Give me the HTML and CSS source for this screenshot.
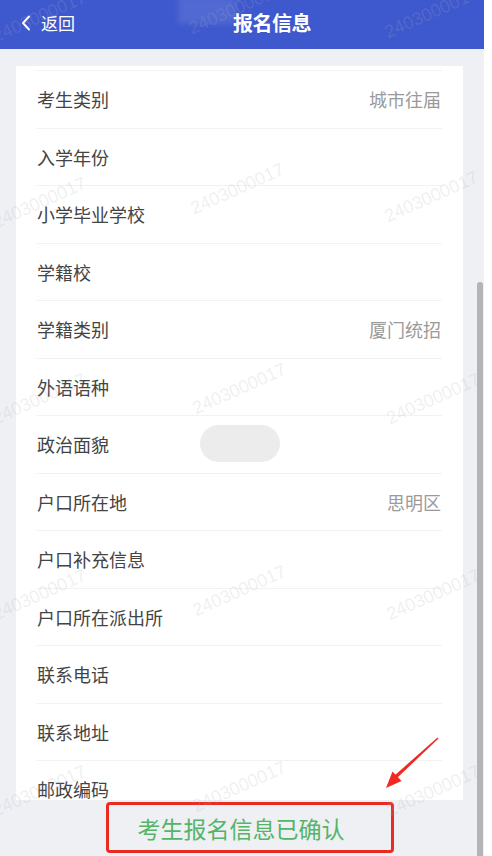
FILE: index.html
```html
<!DOCTYPE html>
<html lang="zh-CN">
  <head>
    <meta charset="UTF-8" />
    <title>报名信息</title>
    <link rel="stylesheet" href="styles.css">
  </head>
  <body>
    <div class="screen">
      <!-- Top bar -->
      <div class="topbar">
        <div class="back">
          <svg class="chev" width="10" height="16" viewBox="0 0 10 16">
            <polyline points="8,1.5 2,8 8,14.5" fill="none" stroke="#fff" stroke-width="2" stroke-linecap="round" stroke-linejoin="round"/>
          </svg>
          <span>返回</span>
        </div>
        <div class="title">报名信息</div>
        <div class="smudge"></div>
      </div>

      <!-- Info list -->
      <div class="content">
        <div class="card">
          <div class="list">
            <div class="row"><span class="label">考生类别</span><span class="value">城市往届</span></div>
            <div class="row"><span class="label">入学年份</span><span class="value"></span></div>
            <div class="row"><span class="label">小学毕业学校</span><span class="value"></span></div>
            <div class="row"><span class="label">学籍校</span><span class="value"></span></div>
            <div class="row"><span class="label">学籍类别</span><span class="value">厦门统招</span></div>
            <div class="row"><span class="label">外语语种</span><span class="value"></span></div>
            <div class="row"><span class="label">政治面貌</span><span class="value"></span></div>
            <div class="row"><span class="label">户口所在地</span><span class="value">思明区</span></div>
            <div class="row"><span class="label">户口补充信息</span><span class="value"></span></div>
            <div class="row"><span class="label">户口所在派出所</span><span class="value"></span></div>
            <div class="row"><span class="label">联系电话</span><span class="value"></span></div>
            <div class="row"><span class="label">联系地址</span><span class="value"></span></div>
            <div class="row"><span class="label">邮政编码</span><span class="value"></span></div>
          </div>
        </div>
      </div>

      <!-- Bottom bar -->
      <div class="footer">
        <div class="confirm">考生报名信息已确认</div>
      </div>

      <!-- Overlays -->
      <div class="toast"></div>
      <div class="scrollbar"></div>
      <svg class="arrow" width="484" height="856" viewBox="0 0 484 856">
        <polygon points="437.5,737.5 438.5,738.5 396.5,778.5 394,776" fill="#ee2a22"/>
        <polygon points="386,788 401.5,781 392.5,771.5" fill="#ee2a22"/>
      </svg>

      <div class="wm" style="left:-2px;top:26px">2403000017</div>
      <div class="wm" style="left:194px;top:18px">2403000017</div>
      <div class="wm" style="left:390px;top:22px">2403000017</div>
      <div class="wm" style="left:-2px;top:212px">2403000017</div>
      <div class="wm" style="left:196px;top:198px">2403000017</div>
      <div class="wm" style="left:390px;top:206px">2403000017</div>
      <div class="wm" style="left:-2px;top:408px">2403000017</div>
      <div class="wm" style="left:198px;top:398px">2403000017</div>
      <div class="wm" style="left:392px;top:408px">2403000017</div>
      <div class="wm" style="left:-2px;top:604px">2403000017</div>
      <div class="wm" style="left:198px;top:600px">2403000017</div>
      <div class="wm" style="left:392px;top:604px">2403000017</div>
      <div class="wm" style="left:-2px;top:800px">2403000017</div>
      <div class="wm" style="left:198px;top:796px">2403000017</div>
      <div class="wm" style="left:392px;top:800px">2403000017</div>
    </div>
  </body>
</html>
```

FILE: styles.css
```css
body {
  margin: 0;
  background: #fff;
  font-family: "Noto Sans CJK SC", "Noto Sans", sans-serif;
}

.screen {
  position: relative;
  width: 484px;
  height: 856px;
  background: #eef0f4;
  overflow: hidden;
}

.topbar {
  position: relative;
  height: 49px;
  background: #3e58cd;
  color: #fff;
  display: flex;
  align-items: center;
  padding-bottom: 4px;
  box-sizing: border-box;
}

.back {
  display: flex;
  align-items: center;
  gap: 10px;
  padding-left: 21px;
  font-size: 17px;
}

.chev {
  display: block;
}

.title {
  margin-left: auto;
  margin-right: 173px;
  font-size: 20px;
  font-weight: bold;
  letter-spacing: -0.5px;
}

.smudge {
  position: absolute;
  left: 178px;
  top: -4px;
  width: 58px;
  height: 28px;
  background: rgba(255, 255, 255, 0.1);
  filter: blur(3px);
}

.content {
  padding: 17px 21px 0 16px;
}

.card {
  background: #fff;
  height: 734px;
  padding: 4px 21px 0;
  box-sizing: border-box;
  overflow: hidden;
}

.list {
  border-top: 1px solid #f2f2f2;
}

.row {
  display: flex;
  justify-content: space-between;
  align-items: center;
  height: 57.5px;
  line-height: 22px;
  box-sizing: border-box;
  border-bottom: 1px solid #f2f2f2;
  font-size: 18px;
}

.label {
  color: #444;
}

.value {
  color: #9a9a9a;
  padding-right: 1px;
}

.footer {
  padding: 2px 0 0 106px;
}

.confirm {
  width: 288px;
  height: 51px;
  box-sizing: border-box;
  border: 3px solid #ea2b22;
  border-radius: 4px;
  display: flex;
  align-items: center;
  justify-content: center;
  padding-right: 18px;
  color: #55b467;
  font-size: 23px;
}

.toast {
  position: absolute;
  left: 200px;
  top: 425px;
  width: 80px;
  height: 37px;
  border-radius: 19px;
  background: #ececec;
}

.scrollbar {
  position: absolute;
  left: 477px;
  top: 282px;
  width: 6px;
  height: 580px;
  border-radius: 3px;
  background: #b4b4b6;
}

.arrow {
  position: absolute;
  left: 0;
  top: 0;
  pointer-events: none;
}

.wm {
  position: absolute;
  font-family: "Liberation Sans", sans-serif;
  font-size: 18px;
  color: rgba(170, 175, 190, 0.2);
  transform: rotate(-24deg);
  transform-origin: left bottom;
  white-space: nowrap;
  pointer-events: none;
}
```
